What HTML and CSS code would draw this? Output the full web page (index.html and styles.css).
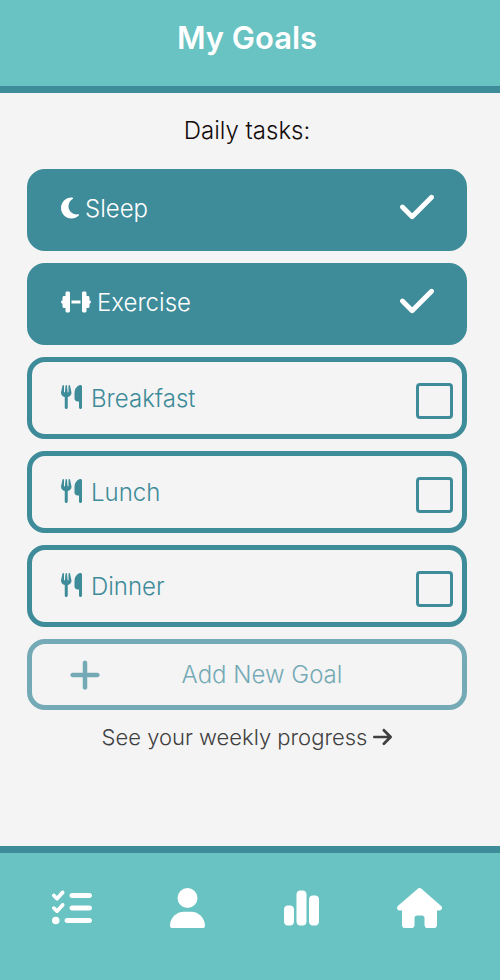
FILE: index.html
```html
<!DOCTYPE html>
<html lang="en">
<head>
<meta charset="utf-8">
<meta name="viewport" content="width=device-width, initial-scale=1">
<title>My Goals</title>
<link rel="stylesheet" href="styles.css">
</head>
<body>
<svg class="sprite" aria-hidden="true">
  <symbol id="utensils" viewBox="0 0 448 512"><path d="M416 0C400 0 288 32 288 176l0 112c0 35.3 28.7 64 64 64l32 0 0 128c0 17.7 14.3 32 32 32s32-14.3 32-32l0-128 0-112 0-208c0-17.7-14.3-32-32-32zM64 16C64 7.8 57.9 1 49.7 .1S34.2 4.6 32.4 12.5L2.1 148.8C.7 155.1 0 161.5 0 167.9c0 45.9 35.1 83.6 80 87.7L80 480c0 17.7 14.3 32 32 32s32-14.3 32-32l0-224.4c44.9-4.1 80-41.8 80-87.7c0-6.4-.7-12.8-2.1-19.1L191.6 12.5c-1.8-8-9.3-13.3-17.4-12.4S160 7.8 160 16l0 134.2c0 5.4-4.4 9.8-9.8 9.8c-5.1 0-9.3-3.9-9.8-9L127.9 14.6C127.2 6.3 120.3 0 112 0s-15.2 6.3-15.9 14.6L83.7 151c-.5 5.1-4.7 9-9.8 9c-5.4 0-9.8-4.4-9.8-9.8L64 16zm48.3 152l-.3 0-.3 0 .3-.7 .3 .7z"/></symbol>
  <symbol id="check" viewBox="0 0 448 512"><path d="M438.6 105.4c12.5 12.5 12.5 32.8 0 45.3l-256 256c-12.5 12.5-32.8 12.5-45.3 0l-128-128c-12.5-12.5-12.5-32.8 0-45.3s32.8-12.5 45.3 0L160 338.7 393.4 105.4c12.5-12.5 32.8-12.5 45.3 0z"/></symbol>
</svg>

<header class="header">
  <h1>My Goals</h1>
</header>

<main class="main">
  <h2 class="subtitle">Daily tasks:</h2>
  <ul class="goals">
    <li>
      <label class="goal goal-done">
        <svg class="goal-icon moon" viewBox="0 0 384 512" aria-hidden="true"><path d="M223.5 32C100 32 0 132.3 0 256S100 480 223.5 480c60.6 0 115.5-24.2 155.8-63.4c5-4.9 6.3-12.5 3.1-18.7s-10.1-9.7-17-8.5c-9.8 1.7-19.8 2.6-30.1 2.6c-96.9 0-175.5-78.8-175.5-176c0-65.8 36-123.1 89.3-153.3c6.1-3.5 9.2-10.5 7.7-17.3s-7.3-11.9-14.3-12.5c-6.3-.5-12.6-.8-19-.8z"/></svg>
        <span class="goal-name">Sleep</span>
        <span class="tick"><input type="checkbox" checked><svg aria-hidden="true"><use href="#check"/></svg></span>
      </label>
    </li>
    <li>
      <label class="goal goal-done">
        <svg class="goal-icon dumbbell" viewBox="0 0 640 512" aria-hidden="true"><path d="M96 64c0-17.7 14.3-32 32-32l32 0c17.7 0 32 14.3 32 32l0 160 0 64 0 160c0 17.7-14.3 32-32 32l-32 0c-17.7 0-32-14.3-32-32l0-64-32 0c-17.7 0-32-14.3-32-32l0-64c-17.7 0-32-14.3-32-32s14.3-32 32-32l0-64c0-17.7 14.3-32 32-32l32 0 0-64zm448 0l0 64 32 0c17.7 0 32 14.3 32 32l0 64c17.7 0 32 14.3 32 32s-14.3 32-32 32l0 64c0 17.7-14.3 32-32 32l-32 0 0 64c0 17.7-14.3 32-32 32l-32 0c-17.7 0-32-14.3-32-32l0-160 0-64 0-160c0-17.7 14.3-32 32-32l32 0c17.7 0 32 14.3 32 32zM416 224l0 64-192 0 0-64 192 0z"/></svg>
        <span class="goal-name">Exercise</span>
        <span class="tick"><input type="checkbox" checked><svg aria-hidden="true"><use href="#check"/></svg></span>
      </label>
    </li>
    <li>
      <label class="goal">
        <svg class="goal-icon utensils" aria-hidden="true"><use href="#utensils"/></svg>
        <span class="goal-name">Breakfast</span>
        <input class="box" type="checkbox">
      </label>
    </li>
    <li>
      <label class="goal">
        <svg class="goal-icon utensils" aria-hidden="true"><use href="#utensils"/></svg>
        <span class="goal-name">Lunch</span>
        <input class="box" type="checkbox">
      </label>
    </li>
    <li>
      <label class="goal">
        <svg class="goal-icon utensils" aria-hidden="true"><use href="#utensils"/></svg>
        <span class="goal-name">Dinner</span>
        <input class="box" type="checkbox">
      </label>
    </li>
  </ul>
  <button class="add" type="button">
    <svg viewBox="0 0 448 512" aria-hidden="true"><path d="M256 80c0-17.7-14.3-32-32-32s-32 14.3-32 32V224H48c-17.7 0-32 14.3-32 32s14.3 32 32 32H192V432c0 17.7 14.3 32 32 32s32-14.3 32-32V288H400c17.7 0 32-14.3 32-32s-14.3-32-32-32H256V80z"/></svg>
    <span>Add New Goal</span>
  </button>
  <a class="progress" href="#progress">See your weekly progress
    <svg viewBox="0 0 448 512" aria-hidden="true"><path d="M438.6 278.6c12.5-12.5 12.5-32.8 0-45.3l-160-160c-12.5-12.5-32.8-12.5-45.3 0s-12.5 32.8 0 45.3L338.8 224 32 224c-17.7 0-32 14.3-32 32s14.3 32 32 32l306.7 0L233.4 393.4c-12.5 12.5-12.5 32.8 0 45.3s32.8 12.5 45.3 0l160-160z"/></svg>
  </a>
</main>

<nav class="tabs">
  <a href="#goals" aria-label="Goals"><svg viewBox="0 0 512 512"><path d="M152.1 38.2c9.9 8.9 10.7 24 1.8 33.9l-72 80c-4.4 4.9-10.6 7.8-17.2 7.9s-12.9-2.4-17.6-7L7 113C-2.3 103.6-2.3 88.4 7 79s24.6-9.4 33.9 0l22.1 22.1 55.1-61.2c8.9-9.9 24-10.7 33.9-1.8zm0 160c9.9 8.9 10.7 24 1.8 33.9l-72 80c-4.4 4.9-10.6 7.8-17.2 7.9s-12.9-2.4-17.6-7L7 273c-9.4-9.4-9.4-24.6 0-33.9s24.6-9.4 33.9 0l22.1 22.1 55.1-61.2c8.9-9.9 24-10.7 33.9-1.8zM224 96c0-17.7 14.3-32 32-32H480c17.7 0 32 14.3 32 32s-14.3 32-32 32H256c-17.7 0-32-14.3-32-32zm0 160c0-17.7 14.3-32 32-32H480c17.7 0 32 14.3 32 32s-14.3 32-32 32H256c-17.7 0-32-14.3-32-32zM160 416c0-17.7 14.3-32 32-32H480c17.7 0 32 14.3 32 32s-14.3 32-32 32H192c-17.7 0-32-14.3-32-32zM48 368a48 48 0 1 1 0 96 48 48 0 1 1 0-96z"/></svg></a>
  <a href="#profile" aria-label="Profile"><svg viewBox="0 0 448 512"><path d="M224 256A128 128 0 1 0 224 0a128 128 0 1 0 0 256zm-45.7 48C79.8 304 0 383.8 0 482.3C0 498.7 13.3 512 29.7 512H418.3c16.4 0 29.7-13.3 29.7-29.7C448 383.8 368.2 304 269.7 304H178.3z"/></svg></a>
  <a href="#stats" aria-label="Statistics"><svg viewBox="0 0 448 512"><path d="M160 80c0-26.5 21.5-48 48-48h32c26.5 0 48 21.5 48 48V432c0 26.5-21.5 48-48 48H208c-26.5 0-48-21.5-48-48V80zM0 272c0-26.5 21.5-48 48-48H80c26.5 0 48 21.5 48 48V432c0 26.5-21.5 48-48 48H48c-26.5 0-48-21.5-48-48V272zM368 96h32c26.5 0 48 21.5 48 48V432c0 26.5-21.5 48-48 48H368c-26.5 0-48-21.5-48-48V144c0-26.5 21.5-48 48-48z"/></svg></a>
  <a href="#home" aria-label="Home"><svg viewBox="0 0 576 512"><path d="M575.8 255.5c0 18-15 32.1-32 32.1h-32l.7 160.2c0 2.7-.2 5.4-.5 8.1V472c0 22.1-17.9 40-40 40H456c-1.1 0-2.2 0-3.3-.1c-1.4 .1-2.8 .1-4.2 .1H416 392c-22.1 0-40-17.9-40-40V448 384c0-17.7-14.3-32-32-32H256c-17.7 0-32 14.3-32 32v64 24c0 22.1-17.9 40-40 40H160 128.1c-1.5 0-3-.1-4.5-.2c-1.2 .1-2.4 .2-3.6 .2H104c-22.1 0-40-17.9-40-40V360c0-.9 0-1.9 .1-2.8V287.6H32c-18 0-32-14-32-32.1c0-9 3-17 10-24L266.4 8c7-7 15-8 22-8s15 2 21 7L564.8 231.5c8 7 12 15 11 24z"/></svg></a>
</nav>
</body>
</html>
```
FILE: styles.css
```css
:root {
  --teal: #3e8b99;
  --aqua: #68c3c2;
  --muted: #74aab5;
  --page: #f4f4f4;
}

* {
  box-sizing: border-box;
}

body {
  margin: 0;
  min-height: 100vh;
  display: flex;
  flex-direction: column;
  background: var(--page);
  color: #140c0c;
  font-family: Inter, sans-serif;
  font-size: 24px;
  font-weight: 300;
  line-height: 36px;
}

svg {
  display: block;
  fill: currentColor;
}

.sprite {
  position: absolute;
  width: 0;
  height: 0;
}

.header {
  padding: 14px 6px 24px 0;
  background: var(--aqua);
  border-bottom: 7px solid var(--teal);
  color: #fff;
  text-align: center;
}

.header h1 {
  margin: 0;
  font-size: 31px;
  font-weight: 600;
  line-height: 48px;
}

.main {
  flex: 1;
  display: flex;
  flex-direction: column;
  gap: 12px;
  padding: 20px 33px 20px 27px;
}

.subtitle {
  margin: 0 0 8px;
  font-size: 24px;
  font-weight: 300;
  text-align: center;
}

.goals {
  display: flex;
  flex-direction: column;
  gap: 12px;
  margin: 0;
  padding: 0;
  list-style: none;
}

.goal {
  display: flex;
  align-items: center;
  height: 82px;
  padding: 2px 9px 0 29px;
  border: 5px solid var(--teal);
  border-radius: 18px;
  color: var(--teal);
}

.goal-done {
  padding: 0 28px 2px 29px;
  background: var(--teal);
  color: #fff;
}

.goal-icon {
  height: 24px;
  margin: 0 6px 2px 0;
}

.moon {
  width: 18px;
}

.dumbbell {
  width: 30px;
}

.utensils {
  width: 21px;
  margin: 0 9px 5px 0;
}

.goal-name {
  flex: 1;
}

.tick {
  display: grid;
  margin-bottom: 4px;
}

.tick > * {
  grid-area: 1 / 1;
  width: 34px;
  height: 40px;
  margin: 0;
}

.tick input {
  opacity: 0;
}

.box {
  appearance: none;
  width: 37px;
  height: 36px;
  margin: 4px 0 0;
  border: 3px solid var(--teal);
  border-radius: 4px;
}

.add {
  display: grid;
  grid-template-columns: 32px 1fr 32px;
  align-items: center;
  height: 71px;
  padding: 0 37px;
  border: 5px solid var(--muted);
  border-radius: 18px;
  background: none;
  color: var(--muted);
  font: inherit;
}

.add svg {
  width: 32px;
  height: 36px;
}

.add span {
  padding-left: 30px;
}

.progress {
  display: flex;
  align-items: center;
  justify-content: center;
  gap: 6px;
  margin-top: -3px;
  color: #404040;
  font-size: 22px;
  text-decoration: none;
}

.progress svg {
  width: 19px;
  height: 22px;
}

.tabs {
  display: flex;
  justify-content: space-between;
  padding: 35px 58px 52px 52px;
  background: var(--aqua);
  border-top: 7px solid var(--teal);
}

.tabs a {
  color: #fff;
}

.tabs svg {
  height: 40px;
}
```
